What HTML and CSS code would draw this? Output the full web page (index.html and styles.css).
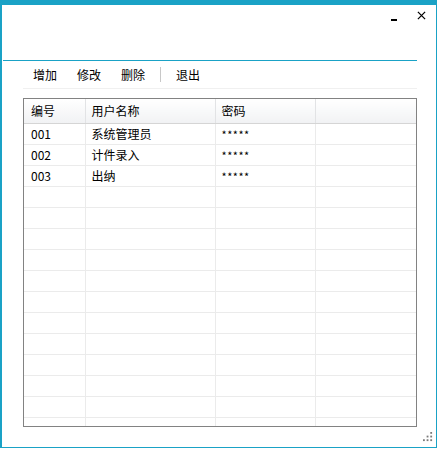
FILE: index.html
```html
<!DOCTYPE html>
<html lang="zh-CN">
<head>
  <meta charset="UTF-8" />
  <title>用户管理</title>
  <link rel="stylesheet" href="styles.css">
</head>
<body>
  <div class="window">
    <div class="titlebar">
      <span class="win-btn min-btn"></span>
      <span class="win-btn close-btn">
        <svg viewBox="0 0 10 10"><path d="M1 1L9 9M9 1L1 9"/></svg>
      </span>
    </div>
    <div class="title-line"></div>
    <div class="toolbar">
      <span class="tool">增加</span>
      <span class="tool">修改</span>
      <span class="tool">删除</span>
      <span class="tool-sep"></span>
      <span class="tool">退出</span>
    </div>
    <div class="grid-box">
      <table class="grid">
        <thead>
          <tr><th class="c1">编号</th><th class="c2">用户名称</th><th class="c3">密码</th><th></th></tr>
        </thead>
        <tbody>
          <tr><td>001</td><td>系统管理员</td><td class="pwd">*****</td><td></td></tr>
          <tr><td>002</td><td>计件录入</td><td class="pwd">*****</td><td></td></tr>
          <tr><td>003</td><td>出纳</td><td class="pwd">*****</td><td></td></tr>
          <tr><td></td><td></td><td></td><td></td></tr>
          <tr><td></td><td></td><td></td><td></td></tr>
          <tr><td></td><td></td><td></td><td></td></tr>
          <tr><td></td><td></td><td></td><td></td></tr>
          <tr><td></td><td></td><td></td><td></td></tr>
          <tr><td></td><td></td><td></td><td></td></tr>
          <tr><td></td><td></td><td></td><td></td></tr>
          <tr><td></td><td></td><td></td><td></td></tr>
          <tr><td></td><td></td><td></td><td></td></tr>
          <tr><td></td><td></td><td></td><td></td></tr>
          <tr><td></td><td></td><td></td><td></td></tr>
          <tr><td></td><td></td><td></td><td></td></tr>
        </tbody>
      </table>
    </div>
    <div class="grip">
      <svg viewBox="0 0 11 11">
        <rect x="8" y="0" width="2" height="2"/>
        <rect x="4" y="4" width="2" height="2"/><rect x="8" y="4" width="2" height="2"/>
        <rect x="0" y="8" width="2" height="2"/><rect x="4" y="8" width="2" height="2"/><rect x="8" y="8" width="2" height="2"/>
      </svg>
    </div>
  </div>
</body>
</html>
```

FILE: styles.css
```css
* { margin: 0; padding: 0; box-sizing: border-box; }
body {
  font-family: "Noto Sans CJK SC", "Noto Sans", sans-serif;
  font-size: 12px;
  color: #000;
  background: #fff;
}
.window {
  width: 437px;
  height: 448px;
  border: 1px solid #1aa2c6;
  border-top: 5px solid #1aa2c6;
  border-left-width: 2px;
  background: #fff;
  display: flex;
  flex-direction: column;
}
.titlebar {
  height: 55px;
  display: flex;
  justify-content: flex-end;
  align-items: flex-start;
  padding-right: 10px;
}
.win-btn { display: block; }
.min-btn {
  width: 6px;
  height: 2px;
  background: #000;
  margin-top: 14px;
  margin-right: 20px;
}
.close-btn {
  width: 9px;
  height: 9px;
  margin-top: 6px;
}
.close-btn svg {
  width: 9px;
  height: 9px;
  display: block;
  stroke: #000;
  stroke-width: 1.4;
  fill: none;
}
.title-line {
  height: 1px;
  margin: 0 19px 0 1px;
  background: #1aa2c6;
}
.toolbar {
  height: 28px;
  margin: 0 19px 0 21px;
  padding-left: 10px;
  display: flex;
  align-items: center;
  border-bottom: 1px solid #f0f0f0;
}
.tool {
  margin-right: 20px;
  line-height: 16px;
}
.tool:nth-child(3) { margin-right: 15px; }
.tool-sep {
  width: 1px;
  height: 15px;
  background: #c8c8c8;
  margin-right: 15px;
}
.grid-box {
  margin: 9px 0 0 21px;
  width: 394px;
  height: 329px;
  border: 1px solid #828282;
  overflow: hidden;
}
.grid {
  width: 100%;
  border-collapse: collapse;
  table-layout: fixed;
}
.grid th {
  height: 24px;
  font-weight: normal;
  text-align: left;
  padding: 0 6px;
  background: linear-gradient(#ffffff, #f1f2f4);
  border-right: 1px solid #e2e3e5;
  border-bottom: 1px solid #d5d5d5;
  line-height: 22px;
}
.grid th:first-child, .grid td:first-child { padding-left: 7px; }
.grid th:last-child { border-right: none; }
.grid .c1 { width: 61px; }
.grid .c2 { width: 130px; }
.grid .c3 { width: 100px; }
.grid td {
  height: 21px;
  padding: 0 6px;
  border-right: 1px solid #ebebeb;
  border-bottom: 1px solid #ebebeb;
  line-height: 20px;
  white-space: nowrap;
}
.grid td:last-child { border-right: none; }
.grid .pwd { font-size: 11px; letter-spacing: 0.5px; }
.grip {
  display: flex;
  justify-content: flex-end;
  padding: 5px 3px 0 0;
}
.grip svg {
  width: 10px;
  height: 10px;
  fill: #7a7a7a;
}
```
